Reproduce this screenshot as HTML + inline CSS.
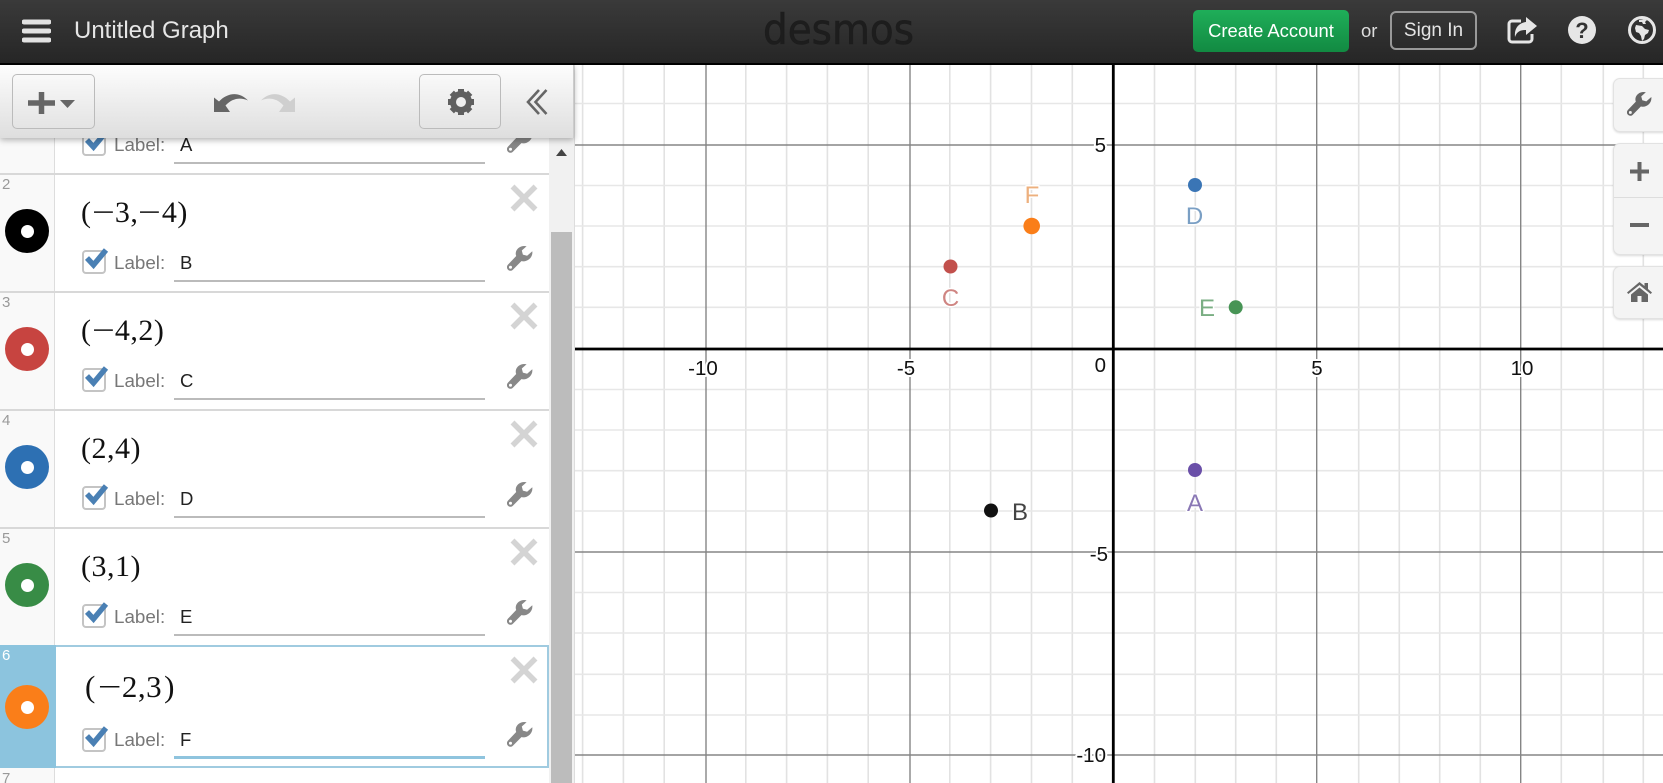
<!DOCTYPE html>
<html><head><meta charset="utf-8"><title>Untitled Graph</title>
<style>
*{box-sizing:border-box}
html,body{margin:0;padding:0;width:1663px;height:783px;overflow:hidden;background:#fff;font-family:"Liberation Sans",sans-serif}
.a{position:absolute}
#hdr{left:0;top:0;width:1663px;height:65px;background:linear-gradient(#3a3a3a,#262626);border-bottom:2px solid #000;z-index:5}
#tb{left:0;top:65px;width:574px;height:73px;background:linear-gradient(#fdfdfd,#dedede);box-shadow:0 2px 6px rgba(0,0,0,.3);z-index:4;border-right:1px solid #ccc}
.btn{position:absolute;top:9px;height:55px;border:1px solid #bbb;border-radius:5px;background:linear-gradient(#f9f9f9,#e4e4e4)}
#list{left:0;top:65px;width:575px;height:718px;background:#fff;overflow:hidden;border-right:1px solid #ddd}
#gut{left:0;top:0;width:55px;height:718px;background:#f9f9f9;border-right:1px solid #ddd}
.sep{position:absolute;left:0;width:549px;height:2px;background:#d8d8d8}
.n{position:absolute;left:2px;font-size:15px;color:#999;line-height:16px}
.dot{position:absolute;left:5px;width:44px;height:44px;border-radius:50%}
.dot i{position:absolute;left:15.5px;top:15.5px;width:13px;height:13px;border-radius:50%;background:#fff}
.m{position:absolute;left:81px;font-family:"Liberation Serif",serif;font-size:30px;color:#111;line-height:34px;white-space:nowrap;letter-spacing:.5px}
.m b{font-weight:normal;display:inline-block;margin:0 3px;transform:scaleX(1.35)}
.cb{position:absolute;left:82px;width:24px;height:24px;border:2px solid #c4c4c4;border-radius:4px;background:#fff}
.ck{position:absolute;left:83px}
.lb{position:absolute;left:114px;font-size:18.8px;color:#777;line-height:20px}
.v{position:absolute;left:180px;font-size:18.5px;color:#222;line-height:20px}
.ul{position:absolute;left:174px;width:311px;height:2px;background:#bbb}
.x{position:absolute;left:510px}
.w{position:absolute;left:507px}
.side{position:absolute;left:1613px;width:60px;background:#f4f4f4;border:1px solid #e2e2e2;border-radius:7px;box-shadow:0 1px 2px rgba(0,0,0,.15)}
</style></head>
<body>
<svg width="0" height="0" style="position:absolute">
<symbol id="wr" viewBox="0 0 26 26"><path fill="currentColor" fill-rule="evenodd" d="M25.3 5.2l-5.2 4.6-4.2-1.2-1.1-4.1L19.6.3C14.4-1 9.5 2.2 8.8 6.6c-.2 1.4 0 2.4.4 3.4L1 18.6c-1.5 1.5-1.4 3.8 0 5.1 1.4 1.4 3.6 1.4 5-.1l8.4-8.5c5.6 1.4 11.8-3.500 10.900-9.900zM3.500 19.800a1.500 1.500 0 1 1 0 3 1.500 1.500 0 0 1 0-3z"/></symbol>
<symbol id="xx" viewBox="0 0 28 28"><path d="M2.500 2.500L25.500 25.500M25.500 2.500L2.500 25.500" stroke="#d4d4d4" stroke-width="5.500" fill="none"/></symbol>
<symbol id="ch" viewBox="0 0 26 26"><path d="M4 11l6.500 7L23 3" stroke="#4a80b4" stroke-width="5.500" fill="none"/></symbol>
</svg>

<!-- graph -->
<svg class="a" style="left:575px;top:65px" width="1088" height="718" viewBox="575 65 1088 718" font-family="Liberation Sans">
<rect x="575" y="65" width="1088" height="718" fill="#fff"/>
<path fill="none" stroke="#e2e2e2" stroke-width="1.600" d="M582.600 65V783M623.400 65V783M664.200 65V783M745.800 65V783M786.600 65V783M827.400 65V783M868.200 65V783M949.800 65V783M990.600 65V783M1031.500 65V783M1072.300 65V783M1154.500 65V783M1195.300 65V783M1235.700 65V783M1276.300 65V783M1358.700 65V783M1399.300 65V783M1439.700 65V783M1480.300 65V783M1561.300 65V783M1603.300 65V783M1643.300 65V783"/>
<path fill="none" stroke="#e7e7e7" stroke-width="1.600" d="M575 103.500H1663M575 185.500H1663M575 226H1663M575 266.700H1663M575 307.300H1663M575 389.500H1663M575 430H1663M575 470.700H1663M575 511H1663M575 592.500H1663M575 633H1663M575 674.300H1663M575 715H1663"/>
<path fill="none" stroke="#858585" stroke-width="1.400" d="M706 65V783M910 65V783M1316.700 65V783M1520.700 65V783M575 145H1663M575 552H1663M575 755H1663"/>
<path fill="none" stroke="#000" stroke-width="2.800" d="M1113.300 65V783M575 349H1663"/>
<g font-size="20.500" fill="#111" stroke="#fff" stroke-width="4" paint-order="stroke" stroke-linejoin="round">
<text x="703" y="375" text-anchor="middle">-10</text>
<text x="906" y="375" text-anchor="middle">-5</text>
<text x="1317" y="375" text-anchor="middle">5</text>
<text x="1522" y="375" text-anchor="middle">10</text>
<text x="1106" y="152" text-anchor="end">5</text>
<text x="1106" y="372" text-anchor="end">0</text>
<text x="1108" y="561" text-anchor="end">-5</text>
<text x="1106" y="762" text-anchor="end">-10</text>
</g>
<circle cx="1195" cy="470" r="7" fill="#6a4fa8"/>
<circle cx="991" cy="510.500" r="7" fill="#111"/>
<circle cx="950.500" cy="266.500" r="7" fill="#c2504c"/>
<circle cx="1195" cy="185" r="7" fill="#3a75b5"/>
<circle cx="1235.700" cy="307.300" r="7" fill="#479455"/>
<circle cx="1031.700" cy="226" r="8.300" fill="#fa7e19"/>
<g font-size="24" text-anchor="middle" stroke="#fff" stroke-width="3" paint-order="stroke" stroke-linejoin="round">
<text x="1195" y="511" fill="#8a78b5">A</text>
<text x="1020" y="520" fill="#444">B</text>
<text x="950.500" y="306" fill="#cf8582">C</text>
<text x="1194.500" y="224" fill="#7a9fc4">D</text>
<text x="1207" y="316" fill="#7aae83">E</text>
<text x="1032" y="203" fill="#edb07e">F</text>
</g>
</svg>

<!-- side buttons -->
<div class="side" style="top:78px;height:54px"><svg style="position:absolute;left:13px;top:13px;color:#666" width="25" height="25"><use href="#wr"/></svg></div>
<div class="side" style="top:143px;height:112px">
<div style="position:absolute;left:0;top:53px;width:60px;height:1px;background:#ddd"></div>
<svg style="position:absolute;left:16px;top:18px" width="19" height="19"><path d="M9.500 0V19M0 9.500H19" stroke="#666" stroke-width="4"/></svg>
<svg style="position:absolute;left:16px;top:78px" width="19" height="6"><path d="M0 3H19" stroke="#666" stroke-width="4"/></svg>
</div>
<div class="side" style="top:266px;height:53px"><svg style="position:absolute;left:13px;top:15px" width="25" height="20" viewBox="0 0 25 20"><path fill="#666" d="M12.500 0L0 10.500l1.300 1.500L12.500 3l11.200 9 1.300-1.500L21 7V1h-3.500v3zM4 12.500V20h6.500v-6h4v6H21v-7.500L12.500 5.500z"/></svg></div>

<!-- expression list -->
<div id="list" class="a">
 <div id="gut" class="a"></div>
 <!-- scrollbar -->
 <div class="a" style="left:549px;top:73px;width:25px;height:645px;background:#f1f1f1"></div>
 <div class="a" style="left:551px;top:167px;width:21px;height:551px;background:#bcbcbc"></div>
 <svg class="a" style="left:556px;top:84px" width="11" height="7"><path d="M5.500 0L11 7H0z" fill="#444"/></svg>

 <!-- row 1 partial -->
 <div class="cb" style="top:67px"></div><svg class="ck" style="top:64px" width="26" height="26"><use href="#ch"/></svg>
 <div class="lb" style="top:70px">Label:</div><div class="v" style="top:70px">A</div><div class="ul" style="top:97px"></div>
 <svg class="w" style="top:63px;color:#888" width="26" height="26"><use href="#wr"/></svg>
 <div class="sep" style="top:108px"></div>

 <!-- row 2 -->
 <div class="n" style="top:112px">2</div>
 <div class="dot" style="top:144px;background:#000"><i></i></div>
 <div class="m" style="top:131px">(<b>−</b>3,<b>−</b>4)</div>
 <svg class="x" style="top:119px" width="28" height="28"><use href="#xx"/></svg>
 <div class="cb" style="top:185px"></div><svg class="ck" style="top:182px" width="26" height="26"><use href="#ch"/></svg>
 <div class="lb" style="top:188px">Label:</div><div class="v" style="top:188px">B</div><div class="ul" style="top:215px"></div>
 <svg class="w" style="top:181px;color:#888" width="26" height="26"><use href="#wr"/></svg>
 <div class="sep" style="top:226px"></div>

 <!-- row 3 -->
 <div class="n" style="top:230px">3</div>
 <div class="dot" style="top:262px;background:#c74440"><i></i></div>
 <div class="m" style="top:249px">(<b>−</b>4,2)</div>
 <svg class="x" style="top:237px" width="28" height="28"><use href="#xx"/></svg>
 <div class="cb" style="top:303px"></div><svg class="ck" style="top:300px" width="26" height="26"><use href="#ch"/></svg>
 <div class="lb" style="top:306px">Label:</div><div class="v" style="top:306px">C</div><div class="ul" style="top:333px"></div>
 <svg class="w" style="top:299px;color:#888" width="26" height="26"><use href="#wr"/></svg>
 <div class="sep" style="top:344px"></div>

 <!-- row 4 -->
 <div class="n" style="top:348px">4</div>
 <div class="dot" style="top:380px;background:#2d70b3"><i></i></div>
 <div class="m" style="top:367px">(2,4)</div>
 <svg class="x" style="top:355px" width="28" height="28"><use href="#xx"/></svg>
 <div class="cb" style="top:421px"></div><svg class="ck" style="top:418px" width="26" height="26"><use href="#ch"/></svg>
 <div class="lb" style="top:424px">Label:</div><div class="v" style="top:424px">D</div><div class="ul" style="top:451px"></div>
 <svg class="w" style="top:417px;color:#888" width="26" height="26"><use href="#wr"/></svg>
 <div class="sep" style="top:462px"></div>

 <!-- row 5 -->
 <div class="n" style="top:466px">5</div>
 <div class="dot" style="top:498px;background:#388c46"><i></i></div>
 <div class="m" style="top:485px">(3,1)</div>
 <svg class="x" style="top:473px" width="28" height="28"><use href="#xx"/></svg>
 <div class="cb" style="top:539px"></div><svg class="ck" style="top:536px" width="26" height="26"><use href="#ch"/></svg>
 <div class="lb" style="top:542px">Label:</div><div class="v" style="top:542px">E</div><div class="ul" style="top:569px"></div>
 <svg class="w" style="top:535px;color:#888" width="26" height="26"><use href="#wr"/></svg>

 <!-- row 6 selected -->
 <div class="a" style="left:0;top:580px;width:549px;height:123px;border:2px solid #a0cbe0;background:#fff"></div>
 <div class="a" style="left:0;top:580px;width:56px;height:123px;background:#8cc4de"></div>
 <div class="n" style="top:583px;color:#fff">6</div>
 <div class="dot" style="top:620px;background:#fa7e19"><i></i></div>
 <div class="m" style="top:605px;left:85px;font-size:31px">(<span style="margin-left:3px"><b style="margin:0 3px 0 2px">−</b>2,3</span><span style="margin-left:2px">)</span></div>
 <svg class="x" style="top:591px" width="28" height="28"><use href="#xx"/></svg>
 <div class="cb" style="top:663px"></div><svg class="ck" style="top:660px" width="26" height="26"><use href="#ch"/></svg>
 <div class="lb" style="top:665px">Label:</div><div class="v" style="top:665px">F</div><div class="ul" style="top:691px;background:#8fc4de;height:3px"></div>
 <svg class="w" style="top:657px;color:#888" width="26" height="26"><use href="#wr"/></svg>

 <!-- row 7 -->
 <div class="n" style="top:706px">7</div>
</div>

<!-- toolbar -->
<div id="tb" class="a">
 <div class="btn" style="left:12px;width:83px">
  <svg style="position:absolute;left:15px;top:17px" width="48" height="22" viewBox="0 0 48 22"><path d="M13.500 0V22M0 11H27" stroke="#666" stroke-width="5.500"/><path d="M32 8H47L39.500 16z" fill="#666"/></svg>
 </div>
 <svg class="a" style="left:214px;top:27px" width="34" height="20" viewBox="0 0 34 20"><path fill="#666" d="M0 20V5.500L5 9.500C12 2 24-2 34 8.500 26 5 18 6.500 11.500 13.500L16 20z"/></svg>
 <svg class="a" style="left:261px;top:27px" width="34" height="20" viewBox="0 0 34 20"><path fill="#cfcfcf" d="M34 20V5.500L29 9.500C22 2 10-2 0 8.500 8 5 16 6.500 22.500 13.500L18 20z"/></svg>
 <div class="btn" style="left:419px;width:82px">
  <svg style="position:absolute;left:27px;top:13px" width="28" height="28" viewBox="0 0 28 28"><circle cx="14" cy="14" r="8" fill="none" stroke="#5f5f5f" stroke-width="6"/><g stroke="#5f5f5f" stroke-width="6"><path d="M14 1V27M1 14H27M4.800 4.800L23.200 23.200M23.200 4.800L4.800 23.200"/></g><circle cx="14" cy="14" r="5" fill="#eee"/></svg>
 </div>
 <svg class="a" style="left:525px;top:23px" width="23" height="28" viewBox="0 0 23 28"><path d="M14 2L3 14l11 12M21.500 2L10.500 14l11 12" fill="none" stroke="#666" stroke-width="2.600"/></svg>
</div>

<!-- header -->
<div id="hdr" class="a">
 <svg class="a" style="left:22px;top:19px" width="29" height="24"><path d="M2 3H27M2 12H27M2 21H27" stroke="#e2e2e2" stroke-width="5" stroke-linecap="round"/></svg>
 <div class="a" style="left:74px;top:17px;font-size:24px;line-height:27px;color:#e6e6e6;white-space:nowrap">Untitled Graph</div>
 <svg class="a" style="left:755px;top:6px" width="170" height="46"><text x="8" y="38" font-family="DejaVu Sans" font-size="42" fill="#1d1d1d" stroke="#1d1d1d" stroke-width=".6" textLength="151" lengthAdjust="spacingAndGlyphs">desmos</text></svg>
 <div class="a" style="left:1193px;top:10px;width:156px;height:42px;border-radius:5px;background:linear-gradient(#1fae59,#128a42);color:#fff;font-size:18.4px;line-height:41px;text-align:center;white-space:nowrap">Create Account</div>
 <div class="a" style="left:1361px;top:20px;font-size:18.5px;line-height:22px;color:#ddd">or</div>
 <div class="a" style="left:1390px;top:11px;width:87px;height:39px;border-radius:6px;border:2px solid #999;color:#e4e4e4;font-size:19px;line-height:35px;text-align:center;white-space:nowrap">Sign In</div>
 <svg class="a" style="left:1507px;top:17px" width="30" height="27" viewBox="0 0 30 27"><path d="M14 4H5a3 3 0 0 0-3 3v15a3 3 0 0 0 3 3h17a3 3 0 0 0 3-3v-5" fill="none" stroke="#e6e6e6" stroke-width="3"/><path d="M19 0l11 9-11 9v-5c-5 0-9 1-11 7-1-9 4-14 11-15z" fill="#e6e6e6"/></svg>
 <svg class="a" style="left:1568px;top:16px" width="28" height="28" viewBox="0 0 28 28"><circle cx="14" cy="14" r="14" fill="#e6e6e6"/><text x="14" y="22" text-anchor="middle" font-family="Liberation Sans" font-weight="bold" font-size="22" fill="#333">?</text></svg>
 <svg class="a" style="left:1628px;top:16px" width="28" height="28" viewBox="0 0 28 28"><circle cx="14" cy="14" r="12.500" fill="none" stroke="#e6e6e6" stroke-width="3"/><path fill="#e6e6e6" d="M11 4l5-1 3 1-2 2 1 2-3 0-1-2-3 0zM8 9l6 1 3 3 4 1-1 3-3 2-1 4-2 2-1-5-2-3-3-1-1-4z"/></svg>
</div>
</body></html>
